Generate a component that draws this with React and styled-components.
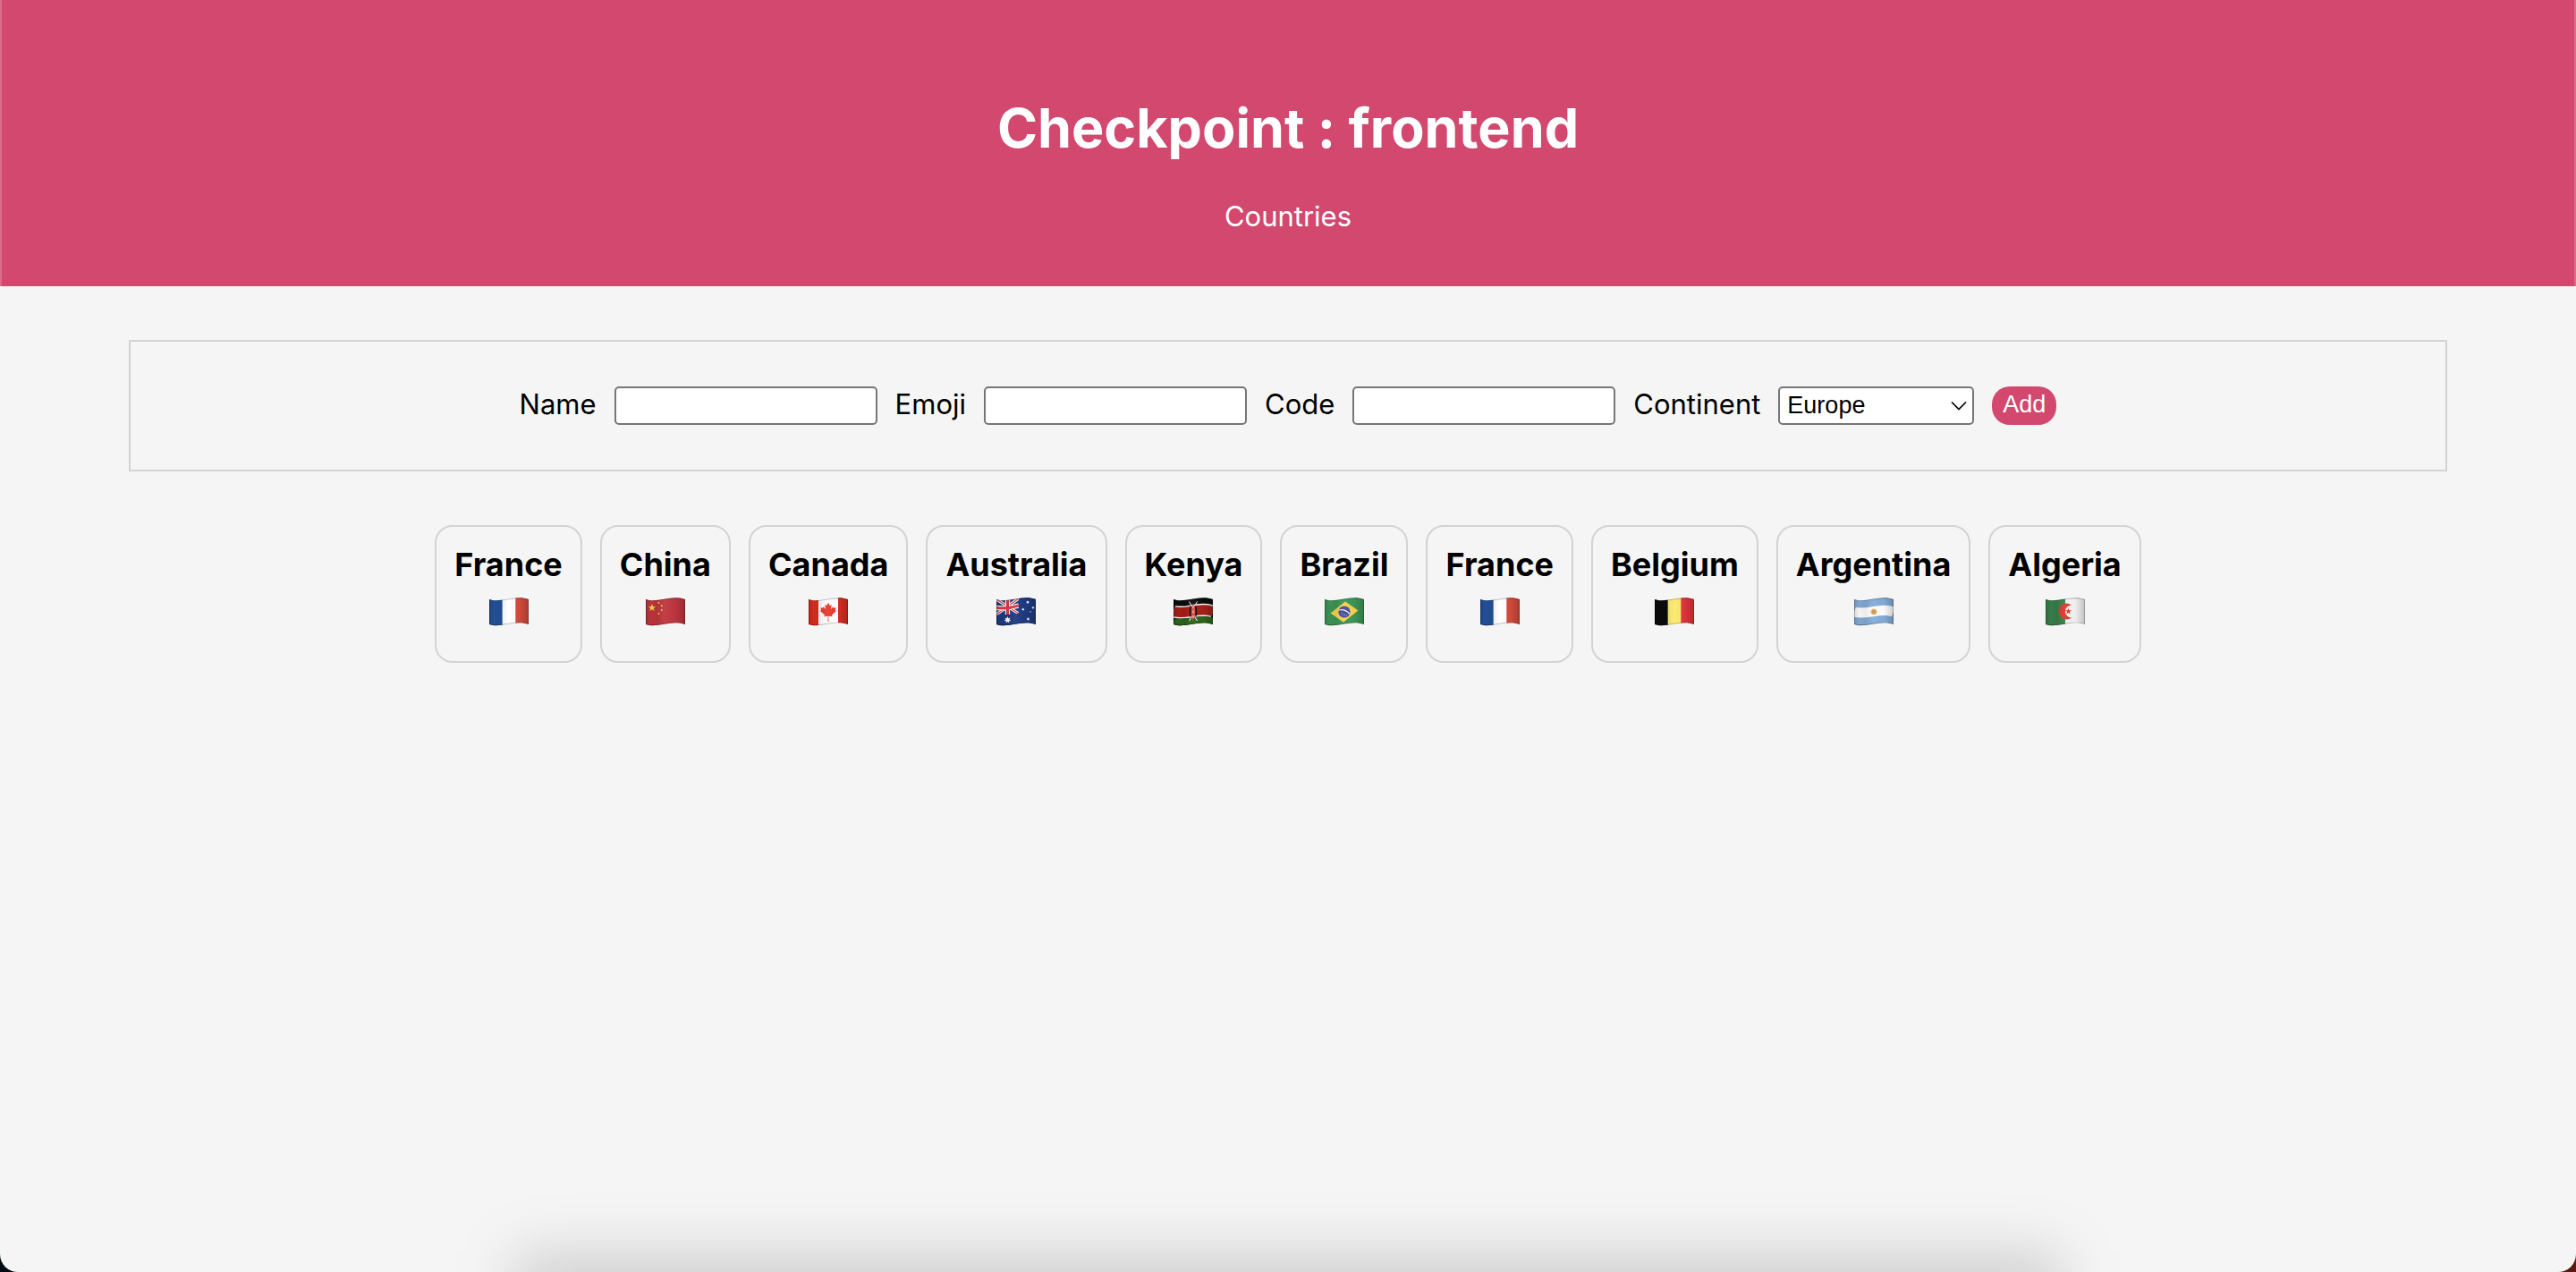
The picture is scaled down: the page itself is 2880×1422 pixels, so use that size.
import React, { useId, useState } from "react";
import styled, { createGlobalStyle } from "styled-components";

const sans = `Inter, "Liberation Sans", sans-serif`;
const controlFont = `"Liberation Sans", Arial, sans-serif`;
const accent = "#d2486e";
const line = "#d3d3d3";

const GlobalStyle = createGlobalStyle`
  * { box-sizing: border-box; }
  html {
    background: linear-gradient(to right, #020a14 50%, #5a1a10 50%);
  }
  body { margin: 0; font-family: ${sans}; color: #000; }
`;

const Page = styled.div`
  min-height: 100vh;
  background: #f5f5f5;
  border-radius: 0 0 20px 20px;
  overflow: hidden;
`;

const Header = styled.header`
  display: flex;
  flex-direction: column;
  align-items: center;
  gap: 40px;
  padding: 104px 20px 58px;
  background: ${accent};
  box-shadow: inset 2px 0 rgba(255, 255, 255, 0.2), inset -2px 0 rgba(255, 255, 255, 0.2);
  color: #fff;
`;

const Title = styled.h1`
  margin: 0;
  font-size: 61px;
  line-height: 78px;
  font-weight: 700;
`;

const HomeLink = styled.a`
  color: inherit;
  font-size: 31px;
  line-height: 40px;
  text-decoration: none;
`;

const Main = styled.main`
  display: flex;
  flex-direction: column;
  gap: 60px;
  padding: 60px 5%;
`;

const Form = styled.form`
  display: flex;
  flex-wrap: wrap;
  justify-content: center;
  gap: 20px;
  padding: 50px;
  border: 2px solid ${line};
`;

const Label = styled.label`
  font-size: 31px;
  line-height: 40px;
`;

const TextBox = styled.input`
  width: 294px;
  height: 43px;
  padding: 2px 4px;
  border: 2px solid #767676;
  border-radius: 5px;
  background: #fff;
  font: 27px ${controlFont};
`;

const SelectWrap = styled.div`
  position: relative;
  width: 219px;
  height: 43px;
`;

const Select = styled.select`
  appearance: none;
  width: 100%;
  height: 100%;
  padding: 0 40px 2px 8px;
  border: 2px solid #767676;
  border-radius: 5px;
  background: #fff;
  color: #000;
  font: 27px ${controlFont};
`;

const Chevron = styled.svg`
  position: absolute;
  right: 8px;
  top: 16px;
  width: 18px;
  height: 12px;
  pointer-events: none;
`;

const AddButton = styled.button`
  height: 43px;
  padding: 0 12px 2px;
  border: 0;
  border-radius: 20px;
  background: ${accent};
  color: #fff;
  font: 27px ${controlFont};
`;

const List = styled.ul`
  display: flex;
  flex-wrap: wrap;
  justify-content: center;
  gap: 20px;
  margin: 0;
  padding: 0;
  list-style: none;
`;

const Card = styled.li`
  display: flex;
  flex-direction: column;
  align-items: center;
  gap: 14px;
  padding: 20px 20px 39px;
  border: 2px solid ${line};
  border-radius: 20px;
`;

const CountryName = styled.h3`
  margin: 0;
  font-size: 36px;
  line-height: 45px;
  font-weight: 700;
`;

const FlagSvg = styled.svg`
  display: block;
  width: 44px;
  height: 32px;
`;

const DockShadow = styled.div`
  position: fixed;
  left: 20%;
  right: 20%;
  bottom: -120px;
  height: 142px;
  background: rgba(0, 0, 0, 0.15);
  filter: blur(32px);
  pointer-events: none;
`;

const Columns = ({ colors }) =>
  colors.map((c, i) => (
    <rect key={i} x={(i * 44) / colors.length} width={44 / colors.length + 0.3} height="32" fill={c} />
  ));

const Wave = ({ y, width, color }) => (
  <path d={`M0 ${y} c13 4.5 29 -5.5 44 0`} stroke={color} strokeWidth={width} fill="none" />
);

const star = (cx, cy, r, points = 5, inner = 0.4) =>
  Array.from({ length: points * 2 }, (_, i) => {
    const a = (Math.PI * i) / points - Math.PI / 2;
    const d = i % 2 ? r * inner : r;
    return `${(cx + d * Math.cos(a)).toFixed(2)},${(cy + d * Math.sin(a)).toFixed(2)}`;
  }).join(" ");

const designs = {
  France: <Columns colors={["#23529b", "#ffffff", "#d54b3d"]} />,
  Belgium: <Columns colors={["#0b0b0b", "#fbea6b", "#e0353a"]} />,
  China: (
    <>
      <rect width="44" height="32" fill="#c0363f" />
      <g fill="#f5d83c">
        <polygon points={star(7, 11.5, 4.4)} />
        <polygon points={star(14.5, 6, 1.6)} />
        <polygon points={star(17.8, 9.3, 1.6)} />
        <polygon points={star(17.8, 14, 1.6)} />
        <polygon points={star(14.5, 18, 1.6)} />
      </g>
    </>
  ),
  Canada: (
    <>
      <rect width="44" height="32" fill="#fff" />
      <rect width="11" height="32" fill="#d92d20" />
      <rect x="33" width="11" height="32" fill="#d92d20" />
      <path
        d="M22 5.5l1.8 3.4 2-1-.9 5 2.6-2.6.6 1.5 2.7-.5-1 3 1.2.8-5 4.3.5 1.9-4.2-.5.3 6.2h-1.2l.3-6.2-4.2.5.5-1.9-5-4.3 1.2-.8-1-3 2.7.5.6-1.5 2.6 2.6-.9-5 2 1z"
        fill="#e93a2e"
      />
    </>
  ),
  Australia: (
    <>
      <rect width="44" height="32" fill="#1e3a80" />
      <path d="M0 2L25 18M25 1L0 19" stroke="#fff" strokeWidth="3.2" />
      <path d="M0 2L25 18M25 1L0 19" stroke="#dc3b45" strokeWidth="1.2" />
      <path d="M12.5 0V19M0 11.5Q12 13 25 9" stroke="#fff" strokeWidth="5.4" fill="none" />
      <path d="M12.5 0V19M0 11.5Q12 13 25 9" stroke="#dc3b45" strokeWidth="3.2" fill="none" />
      <path d="M25 0H44V32H0V19.5Q12 21 25 17.5z" fill="#1e3a80" />
      <g fill="#fff">
        <polygon points={star(12.5, 25, 4, 7, 0.5)} />
        <polygon points={star(35, 5.2, 1.9, 7, 0.5)} />
        <polygon points={star(29.8, 13.2, 1.7, 7, 0.5)} />
        <polygon points={star(41, 11.3, 1.7, 7, 0.5)} />
        <polygon points={star(38, 15.8, 1.1)} />
        <polygon points={star(35.5, 24, 1.9, 7, 0.5)} />
      </g>
    </>
  ),
  Kenya: (
    <>
      <rect width="44" height="32" fill="#0c0c0c" />
      <Wave y={15.5} width={14} color="#fff" />
      <Wave y={15.5} width={11} color="#a81f18" />
      <Wave y={28} width={10} color="#2c661b" />
      <path d="M17.5 4.500L20 9M26.5 4.500L24 9M17.5 26L20 22M26.5 26L24 22" stroke="#fff" strokeWidth="1" />
      <path d="M19 8Q16.5 16 19 23Q21 16 19 8M25 8Q27.5 16 25 23Q23 16 25 8" fill="#0c0c0c" />
      <path d="M22 6.5Q27 15.5 22 26Q17 15.5 22 6.5" fill="#d8453c" />
      <path d="M22 9V12M22 14.500V17.500M22 20V23" stroke="#fff" strokeOpacity=".8" strokeWidth="1" />
    </>
  ),
  Brazil: (
    <>
      <rect width="44" height="32" fill="#3d9656" />
      <path d="M6.5 17.5L21 27.5L37.5 14.5L23 4.5Z" fill="#f8d34a" />
      <circle cx="22" cy="16" r="6.6" fill="#474d9f" />
      <path d="M16 14Q23 12.5 28 18.5" stroke="#e8f1ee" strokeWidth="1.2" fill="none" />
      <g fill="#c5cbea">
        <circle cx="19" cy="18" r=".6" />
        <circle cx="22" cy="19.5" r=".6" />
        <circle cx="24.5" cy="20" r=".5" />
      </g>
    </>
  ),
  Argentina: (
    <>
      <rect width="44" height="32" fill="#84add9" />
      <Wave y={16} width={11} color="#fff" />
      <polygon points={star(22, 16, 4.2, 14, 0.7)} fill="#e3b368" />
      <circle cx="22" cy="16" r="2.2" fill="#cf9346" />
    </>
  ),
  Algeria: (
    <>
      <Columns colors={["#37804a", "#f3f3f3"]} />
      <path d="M29 8.5A9 9 0 1 0 29 22.5A7 7 0 1 1 29 8.5Z" fill="#dd3a30" />
      <polygon points={star(25.5, 15.5, 3.7)} fill="#dd3a30" />
    </>
  ),
};

const outline = "M0 2c13 4.5 29 -5.5 44 0v28c-15 -5.5 -31 4.5 -44 0z";

function Flag({ country }) {
  const id = useId();
  return (
    <FlagSvg viewBox="0 0 44 32" role="img" aria-label={`${country} flag`}>
      <defs>
        <clipPath id={`${id}c`}>
          <path d={outline} />
        </clipPath>
        <linearGradient id={`${id}g`}>
          <stop offset="0" stopColor="#000" stopOpacity=".16" />
          <stop offset=".12" stopColor="#000" stopOpacity=".04" />
          <stop offset=".3" stopColor="#000" stopOpacity=".08" />
          <stop offset=".5" stopColor="#fff" stopOpacity=".05" />
          <stop offset=".75" stopColor="#000" stopOpacity=".02" />
          <stop offset="1" stopColor="#000" stopOpacity=".2" />
        </linearGradient>
      </defs>
      <g clipPath={`url(#${id}c)`}>
        {designs[country]}
        <path d={outline} fill={`url(#${id}g)`} stroke="#000" strokeOpacity=".3" strokeWidth="1.5" />
      </g>
    </FlagSvg>
  );
}

const countries = [
  "France", "China", "Canada", "Australia", "Kenya",
  "Brazil", "France", "Belgium", "Argentina", "Algeria",
];

const fields = [
  { id: "name", label: "Name" },
  { id: "emoji", label: "Emoji" },
  { id: "code", label: "Code" },
];

const continents = ["Europe", "Africa", "Asia", "Oceania", "North America", "South America"];

export default function App() {
  const [continent, setContinent] = useState("Europe");
  return (
    <>
      <GlobalStyle />
      <Page>
        <Header>
          <Title>Checkpoint : frontend</Title>
          <HomeLink href="#">Countries</HomeLink>
        </Header>
        <Main>
          <Form onSubmit={(e) => e.preventDefault()}>
            {fields.map((f) => (
              <React.Fragment key={f.id}>
                <Label htmlFor={f.id}>{f.label}</Label>
                <TextBox id={f.id} type="text" />
              </React.Fragment>
            ))}
            <Label htmlFor="continent">Continent</Label>
            <SelectWrap>
              <Select id="continent" value={continent} onChange={(e) => setContinent(e.target.value)}>
                {continents.map((c) => (
                  <option key={c}>{c}</option>
                ))}
              </Select>
              <Chevron viewBox="0 0 18 12" fill="none" stroke="#000" strokeWidth="1.7" aria-hidden="true">
                <path d="M1 1.5l8 8 8-8" />
              </Chevron>
            </SelectWrap>
            <AddButton type="submit">Add</AddButton>
          </Form>
          <List>
            {countries.map((c, i) => (
              <Card key={i}>
                <CountryName>{c}</CountryName>
                <Flag country={c} />
              </Card>
            ))}
          </List>
        </Main>
        <DockShadow />
      </Page>
    </>
  );
}
